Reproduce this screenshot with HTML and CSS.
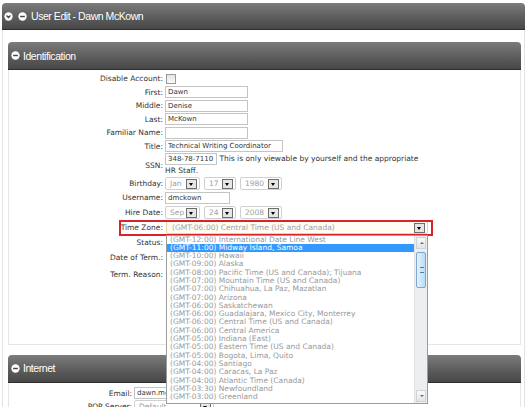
FILE: index.html
```html
<!DOCTYPE html>
<html lang="en">
<head>
    <meta charset="UTF-8">
    <title>User Edit - Dawn McKown</title>
    <link rel="stylesheet" href="styles.css">
</head>
<body>
<div class="window">
    <div class="window-head">
        <svg class="icon" viewBox="0 0 10 10"><circle cx="5" cy="5" r="4.6" fill="#fff"/><path d="M2.8 4 L5 6.2 L7.2 4" fill="none" stroke="#444" stroke-width="1.5"/></svg>
        <svg class="icon" viewBox="0 0 10 10"><circle cx="5" cy="5" r="4.6" fill="#fff"/><rect x="2.4" y="4.2" width="5.2" height="1.6" fill="#444"/></svg>
        <span class="title">User Edit - Dawn McKown</span>
    </div>
    <div class="window-body">
        <div class="group">
            <div class="group-head">
                <svg class="icon" viewBox="0 0 10 10"><circle cx="5" cy="5" r="4.6" fill="#fff"/><rect x="2.4" y="4.2" width="5.2" height="1.6" fill="#444"/></svg>
                <span class="title">Identification</span>
            </div>
            <div class="group-body id-body">
                <div class="row"><label>Disable Account:</label><div class="val"><span class="check"></span></div></div>
                <div class="row"><label>First:</label><div class="val"><input class="txt w83" type="text" value="Dawn"></div></div>
                <div class="row"><label>Middle:</label><div class="val"><input class="txt w83" type="text" value="Denise"></div></div>
                <div class="row"><label>Last:</label><div class="val"><input class="txt w83" type="text" value="McKown"></div></div>
                <div class="row"><label>Familiar Name:</label><div class="val"><input class="txt w83" type="text" value=""></div></div>
                <div class="row"><label>Title:</label><div class="val"><input class="txt w118" type="text" value="Technical Writing Coordinator"></div></div>
                <div class="row"><label>SSN:</label><div class="val note"><input class="txt w50" type="text" value="348-78-7110"> This is only viewable by yourself and the appropriate HR Staff.</div></div>
                <div class="row"><label>Birthday:</label><div class="val">
                    <span class="sel w35">Jan<span class="arrow"></span></span>
                    <span class="sel w32">17<span class="arrow"></span></span>
                    <span class="sel w42">1980<span class="arrow"></span></span>
                </div></div>
                <div class="row tall"><label>Username:</label><div class="val"><input class="txt w65" type="text" value="dmckown"></div></div>
                <div class="row tall"><label>Hire Date:</label><div class="val">
                    <span class="sel w35">Sep<span class="arrow"></span></span>
                    <span class="sel w32">24<span class="arrow"></span></span>
                    <span class="sel w42">2008<span class="arrow"></span></span>
                </div></div>
                <div class="row tz">
                    <label>Time Zone:</label>
                    <div class="val"><span class="sel open">(GMT-06:00) Central Time (US and Canada)<span class="arrow"></span></span></div>
                    <span class="callout"></span>
                    <div class="dropdown">
                        <ul class="options">
                            <li>(GMT-12:00) International Date Line West</li>
                            <li class="picked">(GMT-11:00) Midway Island, Samoa</li>
                            <li>(GMT-10:00) Hawaii</li>
                            <li>(GMT-09:00) Alaska</li>
                            <li>(GMT-08:00) Pacific Time (US and Canada); Tijuana</li>
                            <li>(GMT-07:00) Mountain Time (US and Canada)</li>
                            <li>(GMT-07:00) Chihuahua, La Paz, Mazatlan</li>
                            <li>(GMT-07:00) Arizona</li>
                            <li>(GMT-06:00) Saskatchewan</li>
                            <li>(GMT-06:00) Guadalajara, Mexico City, Monterrey</li>
                            <li>(GMT-06:00) Central Time (US and Canada)</li>
                            <li>(GMT-06:00) Central America</li>
                            <li>(GMT-05:00) Indiana (East)</li>
                            <li>(GMT-05:00) Eastern Time (US and Canada)</li>
                            <li>(GMT-05:00) Bogota, Lima, Quito</li>
                            <li>(GMT-04:00) Santiago</li>
                            <li>(GMT-04:00) Caracas, La Paz</li>
                            <li>(GMT-04:00) Atlantic Time (Canada)</li>
                            <li>(GMT-03:30) Newfoundland</li>
                            <li>(GMT-03:00) Greenland</li>
                        </ul>
                        <div class="scrollbar">
                            <span class="sb-btn up"></span>
                            <div class="sb-track"><span class="sb-thumb"></span></div>
                            <span class="sb-btn down"></span>
                        </div>
                    </div>
                </div>
                <div class="row short"><label>Status:</label><div class="val"></div></div>
                <div class="row taller"><label>Date of Term.:</label><div class="val"></div></div>
                <div class="row taller"><label>Term. Reason:</label><div class="val"></div></div>
            </div>
        </div>
        <div class="group">
            <div class="group-head">
                <svg class="icon" viewBox="0 0 10 10"><circle cx="5" cy="5" r="4.6" fill="#fff"/><rect x="2.4" y="4.2" width="5.2" height="1.6" fill="#444"/></svg>
                <span class="title">Internet</span>
            </div>
            <div class="group-body net-body">
                <div class="row"><label>Email:</label><div class="val"><input class="txt w120" type="text" value="dawn.mckown@example.com"></div></div>
                <div class="row"><label>POP Server:</label><div class="val"><span class="sel w80">Default<span class="arrow"></span></span></div></div>
            </div>
        </div>
    </div>
</div>
</body>
</html>
```

FILE: styles.css
```css
/* Old-style admin form */
body {
    margin: 0;
    background-color: #FFFFFF;
    font-family: "DejaVu Sans", Verdana, sans-serif;
    font-size: 7.5px;
    color: #333333;
    overflow: hidden;
}
.window {
    margin: 3px 3px 0 2px;
}
.window-head, .group-head {
    display: flex;
    align-items: center;
    background: linear-gradient(#7c7c7c, #5a5a5a 60%, #484848);
    border-bottom: 1px solid #2e2e2e;
    border-radius: 4px 4px 0 0;
    color: #FFFFFF;
    font-family: "Liberation Sans", Arial, sans-serif;
    font-size: 10.5px;
    letter-spacing: -0.45px;
    box-sizing: border-box;
}
.window-head {
    height: 27px;
    padding-left: 1px;
}
.window-head .icon {
    margin-right: 4px;
}
.icon {
    width: 9px;
    height: 9px;
    margin-left: 1px;
}
.group-head {
    height: 28px;
    padding-left: 2px;
}
.group-head .icon {
    margin-right: 3px;
}
.window-body {
    border-left: 1px solid #e2e2e2;
    border-right: 1px solid #e2e2e2;
    padding: 12px 3px 0 5px;
}
.group {
    margin-bottom: 10px;
}
.group-body {
    border: 1px solid #e6e6e6;
    border-top: none;
}
.id-body {
    padding: 2px 0 61px;
}
.net-body {
    padding: 4px 0 20px;
}
.row {
    display: flex;
    align-items: center;
    min-height: 13.5px;
    width: 424px;
}
.row.tall {
    min-height: 14.5px;
}
.row.short {
    min-height: 13px;
}
.row.taller {
    min-height: 17px;
}
.row label {
    flex: none;
    width: 154px;
    margin-right: 2px;
    text-align: right;
}
.net-body .row label {
    width: 123px;
}
.val {
    flex: 1;
    display: flex;
    align-items: center;
    gap: 4px;
}
.val.note {
    display: block;
    line-height: 12px;
    padding-right: 14px;
}
.txt {
    box-sizing: border-box;
    height: 12px;
    margin: 0;
    padding: 0 1px 0 2px;
    border: 1px solid #c4c4c4;
    font-family: inherit;
    font-size: 7px;
    color: #333333;
    background-color: #FFFFFF;
    vertical-align: top;
}
.w50 { width: 52px; }
.w65 { width: 65px; }
.w83 { width: 83px; }
.w118 { width: 118px; }
.w120 { width: 120px; }
.check {
    display: inline-block;
    width: 8px;
    height: 8px;
    margin-left: 1px;
    border: 1px solid #9a9a9a;
    background: linear-gradient(#e4e4e4, #fafafa);
}
.sel {
    position: relative;
    box-sizing: border-box;
    display: inline-block;
    height: 13px;
    line-height: 11px;
    padding-left: 4px;
    border: 1px solid #d0d0d0;
    border-radius: 2px;
    color: #a0a0a0;
    background-color: #FFFFFF;
}
.w32 { width: 32px; }
.w35 { width: 35px; }
.w42 { width: 42px; }
.w80 { width: 80px; }
.sel .arrow {
    position: absolute;
    right: 2px;
    top: 1px;
    width: 9px;
    height: 8px;
    border: 1px solid #6e6e6e;
    background-color: #e6e6e6;
}
.sel .arrow::after {
    content: "";
    position: absolute;
    left: 2px;
    top: 3px;
    border-left: 2.5px solid transparent;
    border-right: 2.5px solid transparent;
    border-top: 3px solid #000000;
}
.tz {
    position: relative;
    height: 16px;
}
.sel.open {
    width: 262px;
    margin-left: 1px;
    padding-left: 5px;
    border-color: #e8d5a0;
    background-color: #fffdf3;
}
.callout {
    position: absolute;
    left: 110px;
    right: 0;
    top: 0;
    bottom: 0;
    border: 2px solid #d9232b;
}
.dropdown {
    position: absolute;
    z-index: 10;
    left: 157px;
    top: 15px;
    width: 262px;
    height: 169px;
    display: flex;
    box-sizing: border-box;
    border: 1px solid #9c9c9c;
    background-color: #FFFFFF;
}
.options {
    flex: 1;
    margin: 0;
    padding: 0;
    list-style: none;
    overflow: hidden;
    color: #999999;
}
.options li {
    line-height: 8.3px;
    padding-left: 3px;
    white-space: nowrap;
}
.options li.picked {
    background-color: #3399ff;
    color: #FFFFFF;
}
.scrollbar {
    flex: none;
    width: 12px;
    display: flex;
    flex-direction: column;
    background-color: #eceef0;
    border-left: 1px solid #e0e0e0;
}
.sb-btn {
    position: relative;
    height: 10px;
    margin: 1px;
    border: 1px solid #cfd3d8;
    background: linear-gradient(#fafafa, #e2e4e6);
}
.sb-btn::after {
    content: "";
    position: absolute;
    left: 3px;
    top: 4px;
    border-left: 2px solid transparent;
    border-right: 2px solid transparent;
}
.sb-btn.up::after {
    border-bottom: 2px solid #6a6a6a;
}
.sb-btn.down::after {
    border-top: 2px solid #6a6a6a;
}
.sb-track {
    flex: 1;
    padding-top: 2px;
}
.sb-thumb {
    display: block;
    height: 34px;
    margin: 0 1px;
    border: 1px solid #7fa6cc;
    border-radius: 2px;
    background: linear-gradient(90deg, #e4f2fc, #b9dbf6);
    position: relative;
}
.sb-thumb::after {
    content: "";
    position: absolute;
    left: 3px;
    top: 14px;
    width: 4px;
    height: 4px;
    border-top: 1px solid #4a7db0;
    border-bottom: 1px solid #4a7db0;
}
```
